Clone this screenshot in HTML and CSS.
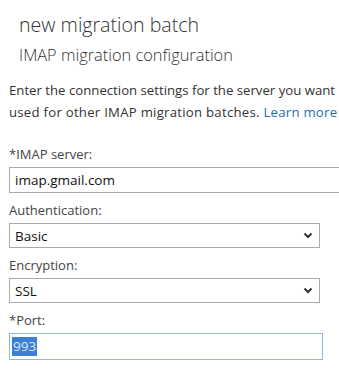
FILE: index.html
```html
<!DOCTYPE html>
<html>
<head>
<meta charset="utf-8">
<link rel="stylesheet" href="styles.css">
</head>
<body>
<div class="page">
  <div class="header">
    <h1 class="title">new migration batch</h1>
    <h2 class="subtitle">IMAP migration configuration</h2>
  </div>
  <p class="intro">Enter the connection settings for the server you want<br><span class="l2">used for other IMAP migration batches. <a href="#" class="link">Learn more</a></span></p>
  <div class="field first">
    <label class="label">*IMAP server:</label>
    <div class="input wide">imap.gmail.com</div>
  </div>
  <div class="field">
    <label class="label">Authentication:</label>
    <div class="input select"><span>Basic</span><svg class="chev" width="10" height="7" viewBox="0 0 10 7"><path d="M1.5 1.5 L5 5 L8.5 1.5" fill="none" stroke="#333" stroke-width="2"/></svg></div>
  </div>
  <div class="field">
    <label class="label">Encryption:</label>
    <div class="input select"><span>SSL</span><svg class="chev" width="10" height="7" viewBox="0 0 10 7"><path d="M1.5 1.5 L5 5 L8.5 1.5" fill="none" stroke="#333" stroke-width="2"/></svg></div>
  </div>
  <div class="field">
    <label class="label">*Port:</label>
    <div class="input port"><span class="sel">993</span></div>
  </div>
</div>
</body>
</html>
```
FILE: styles.css
```css
html, body {
  margin: 0;
  padding: 0;
  background: #fff;
  overflow: hidden;
}
body {
  font-family: "Open Sans", "Noto Sans", sans-serif;
  color: #333;
  width: 339px;
  height: 373px;
}
.page {
  padding: 0 0 0 9px;
}
.header {
  padding-left: 10px;
}
.title {
  margin: 0;
  padding-top: 11px;
  font-size: 19.6px;
  font-weight: 300;
  line-height: 27px;
  color: #333;
}
.subtitle {
  margin: 4px 0 0;
  font-size: 16.4px;
  font-weight: 300;
  line-height: 26px;
  color: #333;
}
.intro {
  margin: 11px 0 0;
  font-size: 13.2px;
  line-height: 22px;
  color: #333;
  white-space: nowrap;
}
.l2 {
  letter-spacing: 0.25px;
}
.link {
  color: #1e6fb5;
  text-decoration: none;
}
.field {
  display: flex;
  flex-direction: column;
}
.label {
  font-size: 13px;
  line-height: 17px;
  color: #444;
  margin-top: 9px;
  margin-bottom: 4px;
}
.field.first .label {
  margin-top: 23px;
}
.input {
  box-sizing: border-box;
  height: 26px;
  border: 1px solid #ababab;
  font-size: 13.5px;
  line-height: 24px;
  padding: 0 5px;
  color: #111;
  display: flex;
  align-items: center;
}
.wide {
  width: 330px;
  border-right: none;
}
.select {
  width: 311px;
  height: 25px;
  justify-content: space-between;
  padding-right: 6px;
}
.chev {
  display: block;
}
.port {
  width: 314px;
  height: 27px;
  border-color: #8fb8d8;
  padding-left: 2px;
}
.sel {
  background: #3d7fd6;
  color: #dbe8f7;
  line-height: 19px;
  padding: 0 1px;
}
```
